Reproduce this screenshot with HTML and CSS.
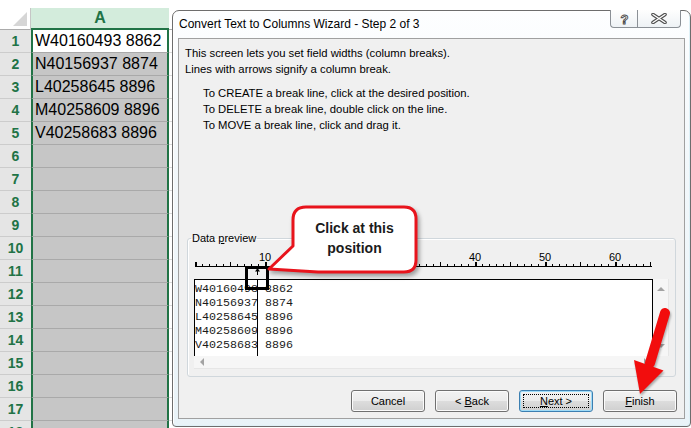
FILE: index.html
```html
<!DOCTYPE html>
<html>
<head>
<meta charset="utf-8">
<link rel="stylesheet" href="styles.css">
</head>
<body>
<div class="screen">
  <div class="sheet">
    <div class="strip"></div>
    <div class="grid">
      <div class="corner"><span class="tri"></span></div>
      <div class="colhead">A</div>
      <div class="colb"></div>

      <div class="rh">1</div><div class="c active">W40160493 8862</div><div class="b"></div>
      <div class="rh">2</div><div class="c">N40156937 8874</div><div class="b"></div>
      <div class="rh">3</div><div class="c">L40258645 8896</div><div class="b"></div>
      <div class="rh">4</div><div class="c">M40258609 8896</div><div class="b"></div>
      <div class="rh">5</div><div class="c">V40258683 8896</div><div class="b"></div>
      <div class="rh">6</div><div class="c"></div><div class="b"></div>
      <div class="rh">7</div><div class="c"></div><div class="b"></div>
      <div class="rh">8</div><div class="c"></div><div class="b"></div>
      <div class="rh">9</div><div class="c"></div><div class="b"></div>
      <div class="rh">10</div><div class="c"></div><div class="b"></div>
      <div class="rh">11</div><div class="c"></div><div class="b"></div>
      <div class="rh">12</div><div class="c"></div><div class="b"></div>
      <div class="rh">13</div><div class="c"></div><div class="b"></div>
      <div class="rh">14</div><div class="c"></div><div class="b"></div>
      <div class="rh">15</div><div class="c"></div><div class="b"></div>
      <div class="rh">16</div><div class="c"></div><div class="b"></div>
      <div class="rh">17</div><div class="c"></div><div class="b"></div>
      <div class="rh">18</div><div class="c"></div><div class="b"></div>
    </div>
  </div>

  <div class="dialog">
    <div class="titlebar">
      <div class="title">Convert Text to Columns Wizard - Step 2 of 3</div>
      <div class="caps">
        <div class="capbtn help">
          <svg width="11" height="13" viewBox="0 0 11 13"><text x="5.5" y="11.5" text-anchor="middle" class="qglyph">?</text></svg>
        </div>
        <div class="capbtn close">
          <svg width="16" height="11" viewBox="0 0 16 11"><path d="M2 1.5 L14 9.5 M14 1.5 L2 9.5" class="xo"/><path d="M2 1.5 L14 9.5 M14 1.5 L2 9.5" class="xi"/></svg>
        </div>
      </div>
    </div>
    <div class="panel">
      <div class="intro">
        <div>This screen lets you set field widths (column breaks).</div>
        <div>Lines with arrows signify a column break.</div>
      </div>
      <div class="steps">
        <div>To CREATE a break line, click at the desired position.</div>
        <div>To DELETE a break line, double click on the line.</div>
        <div>To MOVE a break line, click and drag it.</div>
      </div>
      <fieldset class="group">
        <legend>Data <u>p</u>review</legend>
        <div class="ruler">
          <div class="nums"><span>10</span><span></span><span></span><span>40</span><span>50</span><span>60</span></div>
          <div class="scale"></div>
          <div class="arrowrow">
            <svg width="7" height="8" viewBox="0 0 7 8"><path d="M3.5 1 L1 4.5 L6 4.5 Z" fill="#000"/><rect x="3" y="3" width="1" height="5" fill="#000"/></svg>
          </div>
        </div>
        <div class="preview">
          <div class="pv"><span class="brk"></span>W40160493 8862
N40156937 8874
L40258645 8896
M40258609 8896
V40258683 8896</div>
          <div class="vs"><span class="up"></span><span class="down"></span></div>
          <div class="hs"><span class="left"></span><span class="right"></span></div>
          <div class="sc"></div>
        </div>
      </fieldset>
      <div class="buttons">
        <div class="btn"><span>Cancel</span></div>
        <div class="btn"><span>&lt; <u>B</u>ack</span></div>
        <div class="btn focus"><span><u>N</u>ext &gt;</span></div>
        <div class="btn"><span><u>F</u>inish</span></div>
      </div>
    </div>
  </div>

  <div class="mark"></div>
  <svg class="callout" width="162" height="80" viewBox="0 0 162 80">
    <path d="M44 7 H142 Q154 7 154 19 V60 Q154 72 142 72 H56 L7 69 L31 46 V20 Q31 7 44 7 Z" fill="#fff" stroke="#e8141c" stroke-width="3" stroke-linejoin="round"/>
  </svg>
  <div class="callout-text"><div>Click at this</div><div class="l2">position</div></div>
  <svg class="redarrow" width="50" height="95" viewBox="0 0 50 95">
    <line x1="40" y1="8" x2="25" y2="58" stroke="#f20d0d" stroke-width="10" stroke-linecap="round"/>
    <polygon points="9,55 38.5,65.5 15,89" fill="#f20d0d"/>
  </svg>
</div>
</body>
</html>
```
FILE: styles.css
```css
* { box-sizing: border-box; }
html, body { margin: 0; padding: 0; }
body {
  width: 691px;
  height: 428px;
  overflow: hidden;
  background: #fff;
  font-family: "Liberation Sans", Arial, sans-serif;
}
.screen { position: relative; width: 691px; height: 428px; overflow: hidden; }

/* ---------- spreadsheet ---------- */
.strip { height: 8px; background: #fff; }
.grid {
  display: grid;
  grid-template-columns: 31px 138px 1fr;
  grid-template-rows: 22px;
  grid-auto-rows: 23px;
}
.corner {
  background: #fff;
  border-right: 1px solid #c6c6c6;
  border-bottom: 1px solid #ababab;
  display: flex;
  align-items: flex-end;
  justify-content: flex-end;
  padding: 0 3px 3px 0;
}
.tri {
  width: 14px;
  height: 14px;
  background: #d6d6d6;
  clip-path: polygon(100% 0, 100% 100%, 0 100%);
}
.colhead {
  background: #d3ecdc;
  border-bottom: 2px solid #217346;
  color: #217346;
  font-weight: bold;
  font-size: 16px;
  display: flex;
  align-items: center;
  justify-content: center;
  padding-bottom: 1px;
}
.colb { background: #fff; border-bottom: 1px solid #ababab; }
.rh {
  background: #e5e5e5;
  border-bottom: 1px solid #cccccc;
  color: #217346;
  font-weight: bold;
  font-size: 14px;
  display: flex;
  align-items: center;
  justify-content: center;
}
.c {
  background: #c6c6c6;
  border-left: 2px solid #217346;
  border-right: 2px solid #217346;
  border-bottom: 1px solid #a9a9a9;
  font-size: 16px;
  color: #000;
  padding-left: 2px;
  display: flex;
  align-items: center;
  white-space: nowrap;
}
.c.active { background: #fff; }
.b { border-bottom: 1px solid #dadada; }

/* ---------- dialog ---------- */
.dialog {
  position: absolute;
  left: 172px;
  top: 10px;
  width: 519px;
  height: 417px;
  border: 1px solid #6d6d6d;
  border-radius: 7px 7px 4px 4px;
  background: linear-gradient(180deg, #fdfeff 0%, #f3f8fb 35%, #e9f3f8 100%);
  box-shadow: inset 1px 1px 0 #ffffff, inset -1px -1px 0 #dff1f7;
  display: flex;
  flex-direction: column;
}
.titlebar {
  height: 27px;
  display: flex;
  align-items: flex-start;
}
.title {
  padding-left: 6px;
  line-height: 27px;
  font-size: 12px;
  color: #000;
}
.caps { margin-left: auto; margin-right: 9px; margin-top: -1px; display: flex; }
.capbtn {
  height: 18px;
  border: 1px solid #8b9096;
  border-top: none;
  background: linear-gradient(#fefefe, #eef2f5);
  display: flex;
  align-items: center;
  justify-content: center;
}
.help { width: 27px; border-right: none; border-radius: 0 0 0 4px; }
.close { width: 44px; border-radius: 0 0 4px 0; }
.qglyph { font: bold 13px "Liberation Sans", sans-serif; fill: #fff; stroke: #4a4a4a; stroke-width: 0.9px; }
.xo { stroke: #4d4d4d; stroke-width: 3.6; stroke-linecap: round; fill: none; }
.xi { stroke: #ffffff; stroke-width: 1.4; stroke-linecap: round; fill: none; }

.panel {
  flex: 1;
  margin: 0 5px 7px 5px;
  border: 1px solid #a0a0a0;
  background: #f0f0f0;
  display: flex;
  flex-direction: column;
  font-size: 11.3px;
  line-height: 16px;
  color: #000;
}
.intro { margin: 6px 0 0 6px; }
.steps { margin: 8px 0 0 24px; }

.group {
  margin: auto 8px 0 8px;
  padding: 0 7px 7px 6px;
  border: 1px solid #d0d7dc;
  border-radius: 3px;
  min-inline-size: 0;
  box-shadow: inset 1px 1px 0 #fff;
}
.group legend {
  font-size: 11px;
  line-height: 14px;
  padding: 0 1px;
  margin-left: -3px;
}
.ruler { width: 460px; height: 27px; margin-top: 7px; }
.nums {
  display: flex;
  height: 10px;
  margin-top: 4px;
  padding-left: 36px;
  font-size: 11px;
  line-height: 10px;
  color: #000;
}
.nums span { width: 70px; text-align: center; }
.scale {
  margin-left: 1px;
  width: 457px;
  height: 5px;
  border-bottom: 1px solid #000;
  background:
    repeating-linear-gradient(to right, #000 0 2px, transparent 2px 70px) left bottom / 100% 4px no-repeat,
    repeating-linear-gradient(to right, #000 0 1px, transparent 1px 35px) left bottom / 100% 4px no-repeat,
    repeating-linear-gradient(to right, #000 0 1px, transparent 1px 7px) left bottom / 100% 2px no-repeat;
}
.arrowrow { height: 8px; display: flex; padding-left: 60px; }
.arrowrow svg { display: block; }

.preview {
  display: grid;
  grid-template-columns: 459px 16px;
  grid-template-rows: 77px 13px;
}
.pv {
  position: relative;
  border: 1px solid #000;
  border-bottom: none;
  background: #fff;
  font-family: "Liberation Mono", "Courier New", monospace;
  font-size: 11.67px;
  line-height: 14px;
  padding-top: 2px;
  white-space: pre;
  color: #1a1a1a;
  overflow: hidden;
}
.brk { position: absolute; left: 62px; top: 0; bottom: 0; width: 1px; background: #000; }
.vs {
  background: #f6f6f6;
  border-right: 1px solid #e6e6e6;
  display: flex;
  flex-direction: column;
  align-items: center;
  justify-content: space-between;
  padding: 8px 0 8px 0;
}
.up { width: 0; height: 0; border-left: 4px solid transparent; border-right: 4px solid transparent; border-bottom: 4px solid #a3a3a3; }
.down { width: 0; height: 0; border-left: 4px solid transparent; border-right: 4px solid transparent; border-top: 4px solid #a3a3a3; }
.hs {
  background: #f6f6f6;
  border-bottom: 1px solid #e6e6e6;
  display: flex;
  align-items: center;
  justify-content: space-between;
  padding: 0 5px 0 6px;
}
.left { width: 0; height: 0; border-top: 4px solid transparent; border-bottom: 4px solid transparent; border-right: 4px solid #a3a3a3; }
.right { width: 0; height: 0; border-top: 4px solid transparent; border-bottom: 4px solid transparent; border-left: 4px solid #a3a3a3; }
.sc { background: #f0f0f0; }

.buttons {
  display: flex;
  justify-content: flex-end;
  gap: 10px;
  margin: 13px 7px 6px 0;
}
.btn {
  width: 74px;
  height: 22px;
  border: 1px solid #707070;
  border-radius: 3px;
  background: linear-gradient(#f2f2f2 0%, #ebebeb 50%, #dddddd 50%, #cfcfcf 100%);
  box-shadow: inset 0 0 0 1px #fbfbfb;
  font-size: 11px;
  color: #000;
  display: flex;
  align-items: center;
  justify-content: center;
}
.btn.focus {
  border-color: #3c7fb1;
  box-shadow: inset 0 0 0 1px #9fdcf8;
  align-items: stretch;
  padding: 3px;
}
.btn.focus span {
  flex: 1;
  border: 1px dotted #000;
  display: flex;
  align-items: center;
  justify-content: center;
}

/* ---------- annotations ---------- */
.mark {
  position: absolute;
  left: 245px;
  top: 266px;
  width: 24px;
  height: 24px;
  border: 3px solid #000;
}
.callout {
  position: absolute;
  left: 262px;
  top: 200px;
  filter: drop-shadow(2px 3px 2px rgba(0, 0, 0, 0.35));
}
.callout-text {
  position: absolute;
  left: 293px;
  top: 207px;
  width: 123px;
  padding-top: 13px;
  text-align: center;
  font-weight: bold;
  font-size: 14px;
  line-height: 16px;
  color: #1b1b1b;
}
.callout-text .l2 { margin-top: 4px; }
.redarrow {
  position: absolute;
  left: 625px;
  top: 305px;
  filter: drop-shadow(1px 2px 1px rgba(0, 0, 0, 0.3));
}
```
